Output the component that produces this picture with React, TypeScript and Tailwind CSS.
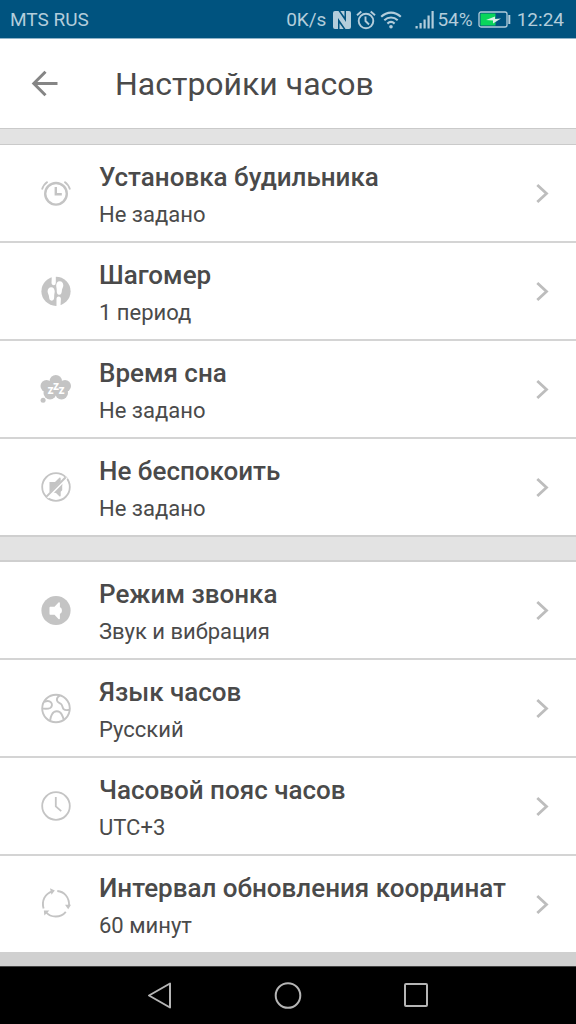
import React from 'react';

interface SettingItem {
  id: string;
  title: string;
  value: string;
  icon: React.ReactNode;
}

const ICON_CLASS = 'h-8 w-8 shrink-0 text-[#c4c4c4]';

const AlarmIcon = () => (
  <svg className={ICON_CLASS} viewBox="0 0 32 32" fill="none" stroke="currentColor" strokeWidth="2.4" aria-hidden="true">
    <circle cx="16" cy="16.8" r="10.8" />
    <path d="M15.8 10v7.3h6" />
    <path d="M7.6 4.800C5 6.500 3 9.200 2 12.600M24.400 4.800C27 6.500 29 9.200 30 12.600" strokeWidth="1.8" />
  </svg>
);

const StepsIcon = () => (
  <svg className={ICON_CLASS} viewBox="0 0 32 32" aria-hidden="true">
    <circle cx="16" cy="16.3" r="14.6" fill="currentColor" />
    <g fill="#fff">
      <path d="M11.800 1h4v6.500c0 1.500-.6 2.700-2 2.700s-2.300-1-2.300-2.400z" />
      <path d="M11.200 12.300c2.400 0 3.500 2 3.500 4.300 0 1.700-.6 3-.5 4.700.1 2.500-.6 4.400-2.400 4.400-2.100 0-2.700-2-2.800-4.200-.1-1.700-1.400-2.900-1.400-4.900 0-2.500 1.400-4.300 3.600-4.300z" />
      <path d="M19.700 6.200c2.400 0 3.600 1.800 3.600 4.300 0 2-1.300 3.200-1.400 4.900-.1 2.200-.7 4.400-2.800 4.400-1.800 0-2.500-2.100-2.400-4.600.1-1.700-.5-3-.5-4.700 0-2.300 1.100-4.300 3.500-4.300z" />
      <path d="M18.600 21.500c1.500 0 2.400 1 2.300 2.500l-.4 7.500h-4v-7.600c0-1.400.7-2.400 2.100-2.400z" />
    </g>
  </svg>
);

const SleepIcon = () => (
  <svg className={ICON_CLASS} viewBox="0 0 32 32" fill="currentColor" aria-hidden="true">
    <circle cx="15.800" cy="8.200" r="6.200" />
    <circle cx="6.500" cy="13" r="6" />
    <circle cx="25" cy="13" r="6" />
    <circle cx="10" cy="20" r="6.500" />
    <circle cx="21.500" cy="20" r="6.500" />
    <path d="M8 8h16v14H8z" />
    <circle cx="3.100" cy="27.200" r="2.500" />
    <g fill="#fff" className="font-['Roboto',sans-serif] text-[12px] font-bold">
      <text x="7.500" y="20.500">z</text>
      <text x="13" y="16.500">z</text>
      <text x="18.500" y="20.500">z</text>
    </g>
  </svg>
);

const MuteIcon = () => (
  <svg className={ICON_CLASS} viewBox="0 0 32 32" fill="none" aria-hidden="true">
    <circle cx="16" cy="16" r="13.800" stroke="currentColor" strokeWidth="1.800" />
    <path d="M9.500 11h5.500l4.300-4.200c.7-.5 1.400-.2 1.400.7v3.200c1.500.8 2 2.500 1.500 4.500v4l-1.500 1.500v3.800c0 .9-.7 1.200-1.400.7l-3.300-3.300-6.500-1z" fill="currentColor" />
    <path d="M26.500 6.500 7.200 26.500" stroke="#fff" strokeWidth="3.200" />
    <path d="M25.700 6.200 6.200 25.900" stroke="currentColor" strokeWidth="2" />
  </svg>
);

const SpeakerIcon = () => (
  <svg className={ICON_CLASS} viewBox="0 0 32 32" aria-hidden="true">
    <circle cx="16" cy="16.500" r="14.600" fill="currentColor" />
    <path d="M10.500 12.700h4l4-4.200c.6-.6 1.400-.3 1.400.5v4.300c1.600.6 2 1.700 2 3.200s-.4 2.600-2 3.200v4.800c0 .8-.8 1.100-1.400.5l-4-4.300h-4c-.6 0-1-.4-1-1v-6c0-.6.4-1 1-1z" fill="#fff" />
  </svg>
);

const GlobeIcon = () => (
  <svg className={ICON_CLASS} viewBox="0 0 32 32" fill="none" stroke="currentColor" strokeWidth="1.900" aria-hidden="true">
    <circle cx="16" cy="16.500" r="13.800" />
    <path d="M4.200 9.800c2.400-1 5.200-1.200 6.800.6 1.500 1.700 1.200 4.400-.8 5.600-2.200 1.200-5 .8-7.800.6" />
    <path d="M19.800 3.500c-1.600 1-3.200 2.600-2.900 4.600.3 2.400 2.800 2.700 4.300 4 1.400 1.300 1 3.600 2.300 4.900 1.600 1.500 4 1.200 6 .8" />
    <path d="M10 28.800c.3-2 .8-4.500 2-6.600 1-1.900 2.700-3 4.800-3s3.800 1.100 4.800 3c.9 1.700 1.700 3.200 2 5.300" />
  </svg>
);

const ClockIcon = () => (
  <svg className={ICON_CLASS} viewBox="0 0 32 32" fill="none" stroke="currentColor" strokeWidth="1.800" aria-hidden="true">
    <circle cx="16" cy="16" r="13.800" />
    <path d="M15.800 7v9.300l5.400 4.900" />
  </svg>
);

const RefreshIcon = () => (
  <svg className={ICON_CLASS} viewBox="0 0 32 32" fill="none" stroke="currentColor" strokeWidth="1.900" aria-hidden="true">
    <path d="M3.600 20.500C1.400 13 4.800 5.500 12.500 3.300" />
    <path d="M17.300 3c6.700.5 12 6 11.800 14.500" />
    <path d="M25.800 23.800c-5.200 6.200-14.800 6.300-20 .2" />
    <g fill="currentColor" stroke="none">
      <path d="M10 .2 14.800 2.500 11.500 6.800z" />
      <path d="M25 16.800h6l-2.800 4.400z" />
      <path d="M3.800 22.400h5.600l-5 5z" />
    </g>
  </svg>
);

const ChevronIcon = () => (
  <svg className="h-6 w-4 shrink-0 text-[#bdbdbd]" viewBox="0 0 16 24" fill="none" stroke="currentColor" strokeWidth="2.800" aria-hidden="true">
    <path d="M1.300 4 10.500 12.500 1.300 21" />
  </svg>
);

const scheduleItems: SettingItem[] = [
  { id: 'alarm', title: 'Установка будильника', value: 'Не задано', icon: <AlarmIcon /> },
  { id: 'steps', title: 'Шагомер', value: '1 период', icon: <StepsIcon /> },
  { id: 'sleep', title: 'Время сна', value: 'Не задано', icon: <SleepIcon /> },
  { id: 'dnd', title: 'Не беспокоить', value: 'Не задано', icon: <MuteIcon /> },
];

const deviceItems: SettingItem[] = [
  { id: 'ring', title: 'Режим звонка', value: 'Звук и вибрация', icon: <SpeakerIcon /> },
  { id: 'language', title: 'Язык часов', value: 'Русский', icon: <GlobeIcon /> },
  { id: 'timezone', title: 'Часовой пояс часов', value: 'UTC+3', icon: <ClockIcon /> },
  { id: 'interval', title: 'Интервал обновления координат', value: '60 минут', icon: <RefreshIcon /> },
];

const SettingRow: React.FC<{ item: SettingItem }> = ({ item }) => (
  <button type="button" className="flex h-24 w-full items-center bg-white pr-6 pl-10 text-left">
    {item.icon}
    <span className="ml-[27px] flex min-w-0 flex-1 flex-col gap-2 pt-2">
      <span className="text-[26px] leading-7 font-medium whitespace-nowrap text-[#4a4a4a]">{item.title}</span>
      <span className="text-[22px] leading-8 text-[#4a4a4a]">{item.value}</span>
    </span>
    <ChevronIcon />
  </button>
);

const SettingList: React.FC<{ items: SettingItem[] }> = ({ items }) => (
  <ul className="divide-y-2 divide-[#d4d4d4]">
    {items.map(item => (
      <li key={item.id}>
        <SettingRow item={item} />
      </li>
    ))}
  </ul>
);

const StatusBar = () => (
  <div className="flex h-[39px] items-center border-b border-[#8fb4c9] bg-[#00537f] pt-0.5 pr-3 pl-[10px] text-[19px] leading-6 text-[#b3cddb]">
    <span className="flex-1">MTS RUS</span>
    <span>0K/s</span>
    <svg className="ml-[6px] h-5 w-5" viewBox="0 0 20 20" aria-hidden="true">
      <path d="M3 1h3.500L14 12V1h3a2 2 0 0 1 2 2v14a2 2 0 0 1-2 2h-3.500L6 8v11H3a2 2 0 0 1-2-2V3a2 2 0 0 1 2-2z" fill="currentColor" />
      <path d="M8.300 1H12.500V6.800zM7.500 19H11.700L7.500 13.200z" fill="currentColor" />
    </svg>
    <svg className="ml-1 h-5 w-5" viewBox="0 0 20 20" fill="none" stroke="currentColor" strokeWidth="1.900" aria-hidden="true">
      <circle cx="10" cy="11" r="7.300" />
      <path d="M9.500 6.500V11l3.500 3.500M1 5.300 5.300 1.500M19 5.300 14.700 1.500" />
    </svg>
    <svg className="ml-1 h-5 w-[22px]" viewBox="0 0 22 20" fill="none" stroke="currentColor" strokeWidth="2.100" aria-hidden="true">
      <path d="M1.200 6.800c5.700-5.600 13.900-5.600 19.600 0M4.300 10.200c4-3.700 9.400-3.700 13.400 0M7.400 13.600c2.200-2 5-2 7.200 0" />
      <circle cx="11" cy="16.800" r="1.800" fill="currentColor" stroke="none" />
    </svg>
    <svg className="ml-[13px] h-5 w-5" viewBox="0 0 20 20" fill="currentColor" aria-hidden="true">
      <path d="M.5 16h2.200v2.500H.5zM4.500 13h2.200v5.500H4.500zM8.500 9.500h2.200v9H8.500zM12.500 5.500h2.200v13h-2.200zM16.500 1h2.200v17.500h-2.200z" />
    </svg>
    <span className="ml-[2px]">54%</span>
    <svg className="ml-[5px] h-5 w-[34px]" viewBox="0 0 34 20" aria-hidden="true">
      <rect x="1" y="2" width="28" height="15" rx="2" fill="none" stroke="currentColor" strokeWidth="1.300" />
      <rect x="2.500" y="3.500" width="15" height="12" fill="#0ad65b" />
      <path d="M8 10 17 6.500v2.500l6-.5-8 5V10.500z" fill="#d8f0e6" />
      <path d="M31.300 5v9" stroke="currentColor" strokeWidth="2" />
    </svg>
    <span className="ml-[5px]">12:24</span>
  </div>
);

const NavigationBar = () => (
  <nav className="grid h-[58px] grid-cols-[1fr_128px_128px_128px_1fr] border-t border-[#444] bg-black text-[#b5b5b5]">
    <button type="button" aria-label="Назад" className="col-start-2 flex items-center justify-center">
      <svg className="h-8 w-8" viewBox="0 0 32 32" fill="none" stroke="currentColor" strokeWidth="2" strokeLinejoin="round" aria-hidden="true">
        <path d="M5 15.500 26 3.500v24z" />
      </svg>
    </button>
    <button type="button" aria-label="Домой" className="flex items-center justify-center">
      <svg className="h-8 w-8" viewBox="0 0 32 32" fill="none" stroke="currentColor" strokeWidth="2" aria-hidden="true">
        <circle cx="16" cy="15.500" r="12.300" />
      </svg>
    </button>
    <button type="button" aria-label="Недавние" className="flex items-center justify-center">
      <svg className="h-8 w-8" viewBox="0 0 32 32" fill="none" stroke="currentColor" strokeWidth="2" aria-hidden="true">
        <rect x="5" y="4" width="22" height="22" rx="1" />
      </svg>
    </button>
  </nav>
);

export default function App() {
  return (
    <div className="flex min-h-screen flex-col bg-[#d0d0d0] font-['Roboto',sans-serif]">
      <StatusBar />
      <header className="flex h-[89px] items-center bg-white pl-7">
        <button type="button" aria-label="Вернуться" className="text-[#858585]">
          <svg className="h-8 w-8" viewBox="0 0 32 32" fill="none" stroke="currentColor" strokeWidth="3" aria-hidden="true">
            <path d="M29.500 15.500H6M17.500 3.800 5.800 15.500l11.700 11.700" />
          </svg>
        </button>
        <h1 className="ml-[55px] text-[32px] leading-10 text-[#4a4a4a]">Настройки часов</h1>
      </header>
      <main className="flex flex-col">
        <div className="h-[17px] border-y border-[#cacaca] bg-[#e3e3e3]" />
        <SettingList items={scheduleItems} />
        <div className="h-[27px] border-y-2 border-[#cfcfcf] bg-[#e3e3e3]" />
        <SettingList items={deviceItems} />
      </main>
      <div className="flex-1" />
      <NavigationBar />
    </div>
  );
}
